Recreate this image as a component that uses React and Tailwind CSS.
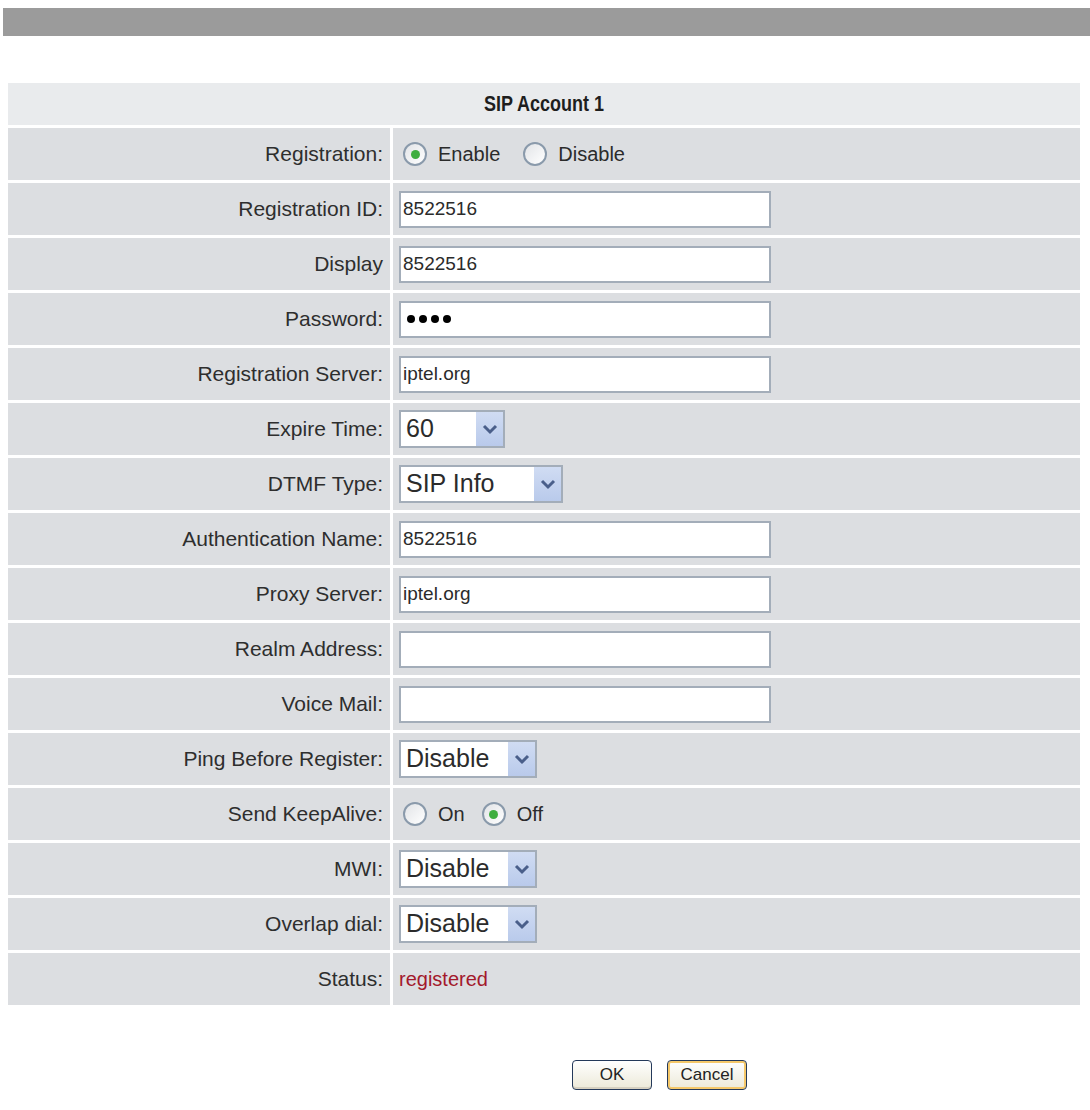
import React from 'react';

const font = "[font-family:'Liberation_Sans',Arial,sans-serif]";

// XP style radio button
const Radio = ({ checked, label }) => (
  <label className="flex items-center gap-[11px]">
    <span className="flex items-center justify-center w-[24px] h-[24px] rounded-full border-2 border-[#8a9aab] bg-gradient-to-br from-[#e2e4e7] to-[#ffffff]">
      {checked && <span className="w-[9px] h-[9px] rounded-full bg-[#3fae3f]" />}
    </span>
    <span className="text-[20px] text-[#2b2b2b]">{label}</span>
  </label>
);

const TextField = ({ value = '', password }) => (
  <div className="w-[372px] h-[37px] border-2 border-[#a3adb9] bg-white flex items-center pl-[2px] text-[19px] text-[#2b2b2b]">
    {password ? (
      <span className="flex gap-[4px] ml-[4px]">
        {[0, 1, 2, 3].map((i) => (
          <span key={i} className="w-[8px] h-[8px] rounded-full bg-black" />
        ))}
      </span>
    ) : (
      value
    )}
  </div>
);

const Select = ({ value, width }) => (
  <div
    className="h-[38px] border-2 border-[#a3adb9] bg-white flex items-center justify-between text-[25px] text-[#2b2b2b]"
    style={{ width }}
  >
    <span className="pl-[5px]">{value}</span>
    <span className="h-full w-[27px] bg-gradient-to-b from-[#d0dcf3] to-[#b9caeb] flex items-center justify-center">
      <svg width="16" height="11" viewBox="0 0 16 11">
        <polyline points="2,2 8,8 14,2" fill="none" stroke="#4a5f8a" strokeWidth="3" />
      </svg>
    </span>
  </div>
);

const rows = [
  { label: 'Registration:', field: <div className="flex items-center gap-[23px] ml-[4px]"><Radio checked label="Enable" /><Radio label="Disable" /></div> },
  { label: 'Registration ID:', field: <TextField value="8522516" /> },
  { label: 'Display', field: <TextField value="8522516" /> },
  { label: 'Password:', field: <TextField password /> },
  { label: 'Registration Server:', field: <TextField value="iptel.org" /> },
  { label: 'Expire Time:', field: <Select value="60" width={106} /> },
  { label: 'DTMF Type:', field: <Select value="SIP Info" width={164} /> },
  { label: 'Authentication Name:', field: <TextField value="8522516" /> },
  { label: 'Proxy Server:', field: <TextField value="iptel.org" /> },
  { label: 'Realm Address:', field: <TextField /> },
  { label: 'Voice Mail:', field: <TextField /> },
  { label: 'Ping Before Register:', field: <Select value="Disable" width={138} /> },
  { label: 'Send KeepAlive:', field: <div className="flex items-center gap-[17px] ml-[4px]"><Radio label="On" /><Radio checked label="Off" /></div> },
  { label: 'MWI:', field: <Select value="Disable" width={138} /> },
  { label: 'Overlap dial:', field: <Select value="Disable" width={138} /> },
  { label: 'Status:', field: <span className="text-[20px] text-[#a3192b]">registered</span> },
];

const Button = ({ children, focused }) => (
  <button
    className={`w-[80px] h-[30px] rounded-[4px] border border-[#24395a] text-[17px] text-[#222] bg-gradient-to-b from-[#ffffff] to-[#ece9d8] ${
      focused ? 'shadow-[inset_0_0_0_2px_#f5c86a]' : 'shadow-[inset_0_-2px_0_#d6d0c0]'
    }`}
  >
    {children}
  </button>
);

export default function App() {
  return (
    <div className={`w-[1090px] h-[1110px] bg-white ${font}`}>
      <div className="pt-[8px] pl-[3px]">
        <div className="h-[28px] bg-[#9b9b9b]" />
      </div>

      <div className="mt-[47px] mx-[8px] w-[1072px] grid grid-cols-[382px_1fr] gap-[3px]">
        <div className="col-span-2 h-[42px] bg-[#e9ebed] flex items-center justify-center">
          <span className="inline-block scale-y-[1.2] text-[18px] font-bold text-[#1e1e1e]">SIP Account 1</span>
        </div>
        {rows.map((r) => (
          <React.Fragment key={r.label}>
            <div className="h-[52px] bg-[#dcdee1] flex items-center justify-end pr-[7px] text-[21px] text-[#2e2e2e]">
              {r.label}
            </div>
            <div className="h-[52px] bg-[#dcdee1] flex items-center pl-[6px]">{r.field}</div>
          </React.Fragment>
        ))}
      </div>

      <div className="mt-[55px] flex gap-[15px] pl-[572px]">
        <Button>OK</Button>
        <Button focused>Cancel</Button>
      </div>
    </div>
  );
}
